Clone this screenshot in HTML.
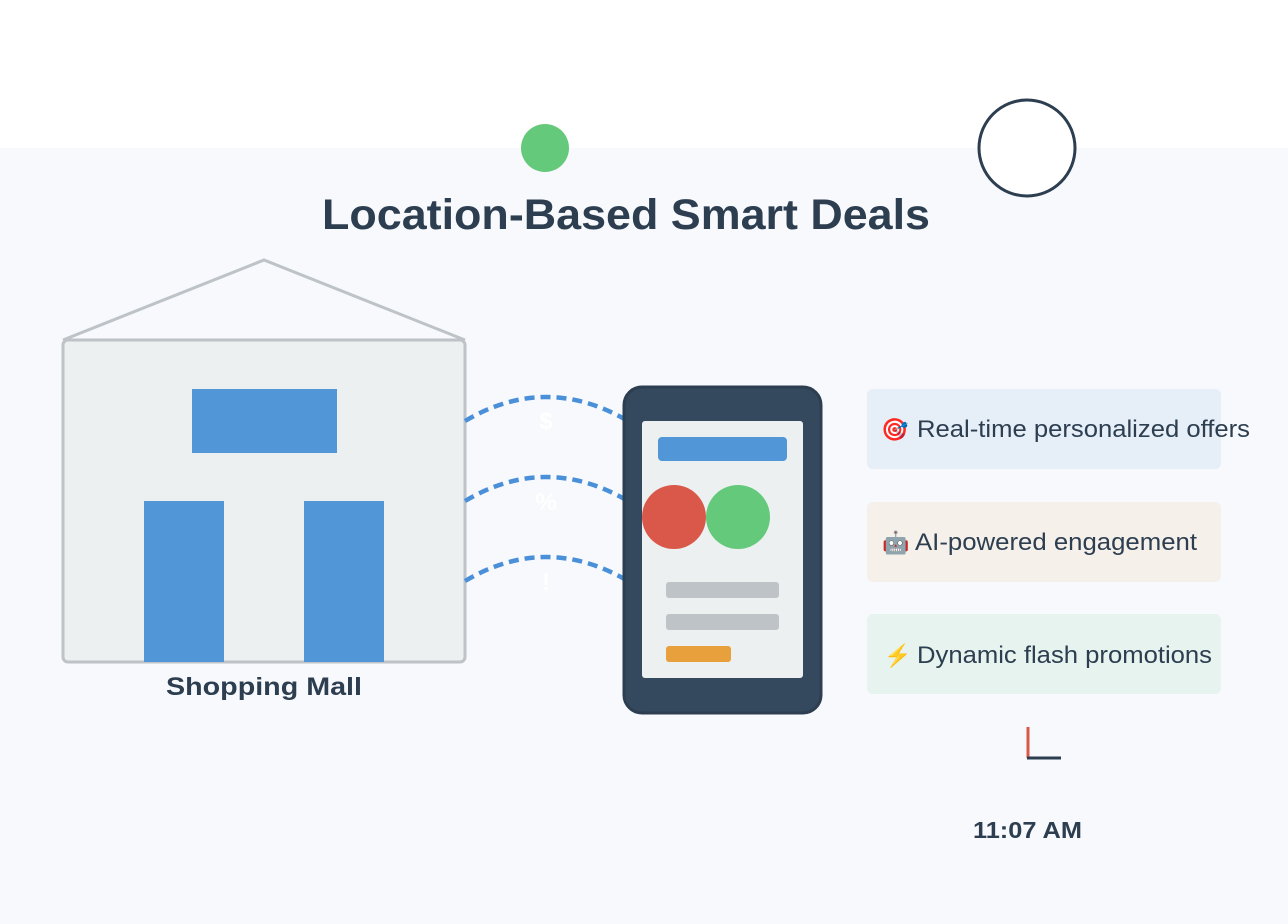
<!DOCTYPE html>
<html><head><meta charset="utf-8"><style>
html,body{margin:0;padding:0;width:1288px;height:924px;overflow:hidden;background:#f7f9fc}
svg{display:block}
text{font-family:"Liberation Sans",sans-serif}
</style></head><body>
<svg width="1288" height="924" viewBox="0 0 1288 924" xmlns="http://www.w3.org/2000/svg">
<rect x="0" y="0" width="1288" height="148" fill="#ffffff"/>
<rect x="0" y="148" width="1288" height="776" fill="#f7f9fc"/>
<circle cx="545" cy="148" r="24" fill="#64c97a"/>
<circle cx="1027" cy="148" r="48" fill="#ffffff" stroke="#2c3e50" stroke-width="3"/>
<text x="322" y="229" font-size="43" font-weight="bold" fill="#2c3e50" textLength="608" lengthAdjust="spacingAndGlyphs">Location-Based Smart Deals</text>
<polyline points="63,340 264,260 465,340" fill="none" stroke="#bdc3c7" stroke-width="3"/>
<rect x="63" y="340" width="402" height="322" rx="5" fill="#ecf0f1" stroke="#bdc3c7" stroke-width="3"/>
<rect x="192" y="389" width="145" height="64" fill="#5196d6"/>
<rect x="144" y="501" width="80" height="161" fill="#5196d6"/>
<rect x="304" y="501" width="80" height="161" fill="#5196d6"/>
<text x="166" y="695" font-size="25" font-weight="bold" fill="#2c3e50" textLength="196" lengthAdjust="spacingAndGlyphs">Shopping Mall</text>
<g fill="none" stroke="#4a90d9" stroke-width="4.5" stroke-dasharray="10,6">
<path d="M465,421 Q546,373 628,421"/>
<path d="M465,501 Q546,453 628,501"/>
<path d="M465,581 Q546,533 628,581"/>
</g>
<g fill="#ffffff" font-size="24" font-weight="bold" text-anchor="middle">
<text x="546" y="429">$</text>
<text x="546" y="510">%</text>
<text x="546" y="590">!</text>
</g>
<rect x="624" y="387" width="197" height="326" rx="18" fill="#34495e" stroke="#2c3e50" stroke-width="3"/>
<rect x="642" y="421" width="161" height="257" rx="3" fill="#ecf0f1"/>
<rect x="658" y="437" width="129" height="24" rx="4" fill="#5196d6"/>
<circle cx="674" cy="517" r="32" fill="#d9584a"/>
<circle cx="738" cy="517" r="32" fill="#64c97a"/>
<rect x="666" y="582" width="113" height="16" rx="3" fill="#bdc3c7"/>
<rect x="666" y="614" width="113" height="16" rx="3" fill="#bdc3c7"/>
<rect x="666" y="646" width="65" height="16" rx="3" fill="#e8a03c"/>
<rect x="867" y="389" width="354" height="80" rx="6" fill="#e6eef7"/>
<rect x="867" y="502" width="354" height="80" rx="6" fill="#f5f0ea"/>
<rect x="867" y="614" width="354" height="80" rx="6" fill="#e7f3ee"/>
<g font-size="22">
<text x="881" y="437">🎯</text>
<text x="882" y="550">🤖</text>
<text x="884" y="663">⚡</text>
</g>
<g font-size="24" fill="#2c3e50">
<text x="917" y="437" textLength="333" lengthAdjust="spacingAndGlyphs">Real-time personalized offers</text>
<text x="915" y="550" textLength="282" lengthAdjust="spacingAndGlyphs">AI-powered engagement</text>
<text x="917" y="663" textLength="295" lengthAdjust="spacingAndGlyphs">Dynamic flash promotions</text>
</g>
<line x1="1028" y1="727" x2="1028" y2="758" stroke="#d9584a" stroke-width="3"/>
<line x1="1027" y1="758" x2="1061" y2="758" stroke="#2c3e50" stroke-width="3"/>
<text x="973" y="838" font-size="23" font-weight="bold" fill="#2c3e50" textLength="109" lengthAdjust="spacingAndGlyphs">11:07 AM</text>
</svg>
</body></html>
